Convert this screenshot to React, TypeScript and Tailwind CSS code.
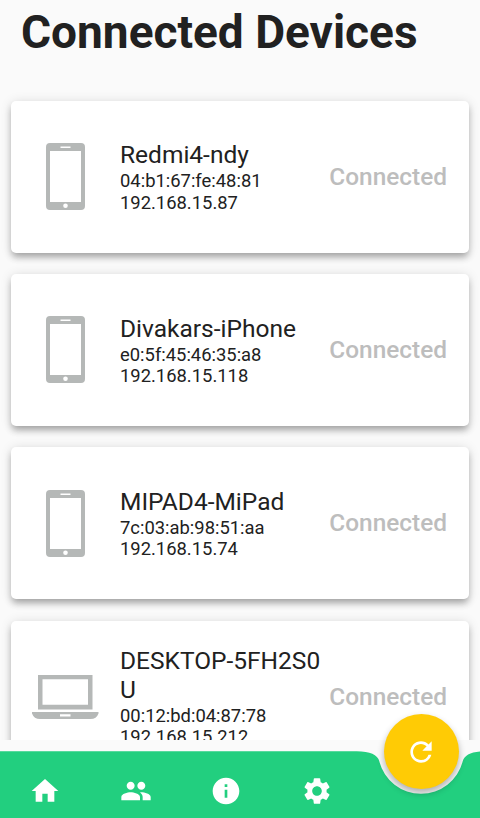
import React from 'react';
import { MdHome, MdInfo, MdPeople, MdRefresh, MdSettings } from 'react-icons/md';

interface Device {
  name: string;
  mac: string;
  ip: string;
  type: 'phone' | 'laptop';
}

const DEVICES: Device[] = [
  { name: 'Redmi4-ndy', mac: '04:b1:67:fe:48:81', ip: '192.168.15.87', type: 'phone' },
  { name: 'Divakars-iPhone', mac: 'e0:5f:45:46:35:a8', ip: '192.168.15.118', type: 'phone' },
  { name: 'MIPAD4-MiPad', mac: '7c:03:ab:98:51:aa', ip: '192.168.15.74', type: 'phone' },
  { name: 'DESKTOP-5FH2S0U', mac: '00:12:bd:04:87:78', ip: '192.168.15.212', type: 'laptop' },
];

const NAV_ITEMS = [
  { label: 'Home', icon: MdHome },
  { label: 'People', icon: MdPeople },
  { label: 'Info', icon: MdInfo },
  { label: 'Settings', icon: MdSettings },
];

const PhoneIcon = () => (
  <svg width="39" height="67" viewBox="0 0 39 67" fill="#b5b8b7">
    <path
      fillRule="evenodd"
      d="M4 0h31a4 4 0 0 1 4 4v59a4 4 0 0 1-4 4H4a4 4 0 0 1-4-4V4a4 4 0 0 1 4-4zM4 8v51h31V8zM14.5 3.5v1.5h10V3.5z"
    />
    <circle cx="19.5" cy="62.7" r="2.3" fill="#fff" />
  </svg>
);

const LaptopIcon = () => (
  <svg width="67" height="44" viewBox="0 0 67 44" fill="#b5b8b7">
    <path fillRule="evenodd" d="M6 0h54.5v34.5H6zM10.5 4.3v25.5H56V4.3z" />
    <path fillRule="evenodd" d="M0 37h66.5v1.5q-2 5.5-8 5.5H8q-6 0-8-5.5zM28 39.2v2.4h10.5v-2.4z" />
  </svg>
);

const DeviceCard: React.FC<{ device: Device }> = ({ device }) => {
  return (
    <div className="flex h-[152px] shrink-0 items-center rounded-[5px] bg-white pr-[22px] shadow-[0_5px_7px_-1px_rgba(0,0,0,0.3),0_1px_12px_rgba(0,0,0,0.12)]">
      <div className="flex w-[109px] shrink-0 justify-center">
        {device.type === 'phone' ? <PhoneIcon /> : <LaptopIcon />}
      </div>
      <div className="min-w-0 flex-1 text-[#212121]">
        <h2 className="mb-[1.2px] text-[24.5px] leading-[29px] break-all">{device.name}</h2>
        <p className="text-[18.4px] leading-[21.3px]">{device.mac}</p>
        <p className="text-[18.4px] leading-[21.3px]">{device.ip}</p>
      </div>
      <span className="ml-1.5 text-[24.4px] leading-7 font-medium text-[#bdbdbd]">Connected</span>
    </div>
  );
};

export default function App() {
  return (
    <div className="flex h-[818px] w-[480px] flex-col overflow-hidden bg-[#fafafa] font-['Roboto','Liberation_Sans',sans-serif]">
      <main className="h-[740px] shrink-0 overflow-hidden">
        <h1 className="h-[100.6px] pt-[5px] pl-[21px] text-[46px] leading-[54px] font-bold whitespace-nowrap text-[#212121]">
          Connected Devices
        </h1>
        <div className="flex flex-col gap-[21.4px] px-[11px]">
          {DEVICES.map((device) => (
            <DeviceCard key={device.mac} device={device} />
          ))}
        </div>
      </main>

      <nav className="relative mt-[11px] h-[67px] shrink-0">
        {/* bar with the notch around the refresh button */}
        <svg className="absolute inset-0" width="480" height="67" viewBox="0 0 480 67">
          <path
            d="M0 0.3H356.7Q376.7 0.3 379.3 10.3A43 43 0 0 0 462.7 10.3Q465.3 0.3 485.3 0.3V67H0z"
            fill="#22cf7f"
          />
        </svg>
        <div className="relative flex h-full w-[362px] items-center pt-[13px]">
          {NAV_ITEMS.map(({ label, icon: Icon }) => (
            <button key={label} aria-label={label} className="flex flex-1 justify-center text-white">
              <Icon size={32} />
            </button>
          ))}
        </div>
        <button
          aria-label="Refresh"
          className="absolute -top-[37px] left-[383.5px] flex size-[75px] items-center justify-center rounded-full bg-[#ffcb05] text-white shadow-[0_4px_7px_rgba(0,0,0,0.3)]"
        >
          <MdRefresh size={32} />
        </button>
      </nav>
    </div>
  );
}
